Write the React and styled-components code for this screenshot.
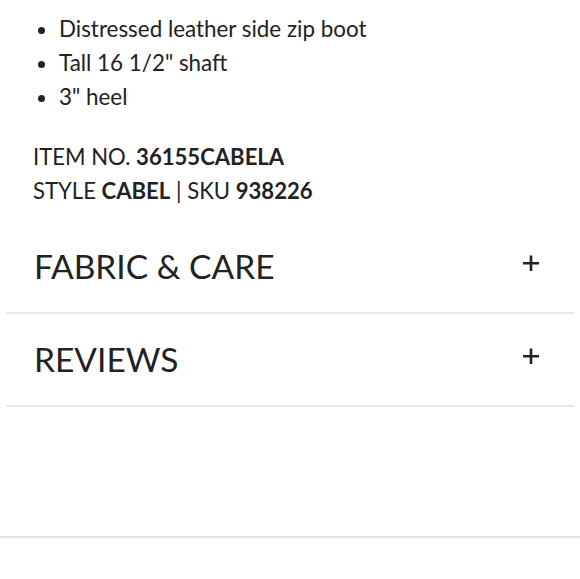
import React from "react";
import styled, { createGlobalStyle } from "styled-components";

const Global = createGlobalStyle`
  html, body { margin: 0; padding: 0; background: #fff; }
  body { font-family: Lato, "Noto Sans", sans-serif; color: #222; }
`;

const Page = styled.div`
  display: flex;
  flex-direction: column;
  padding-top: 12px;
`;

const Bullets = styled.ul`
  margin: 0;
  padding: 0 0 0 59px;
  font-size: 22.4px;
  line-height: 34px;
  list-style: disc;
`;

const Details = styled.div`
  margin: 26px 0 0;
  padding-left: 33px;
  font-size: 22.1px;
  line-height: 34px;
`;

const Line = styled.div``;

const B = styled.b`
  font-weight: 700;
`;

const Accordion = styled.div`
  margin: 13px 6px 0;
  display: flex;
  flex-direction: column;
`;

const Row = styled.div`
  display: flex;
  align-items: center;
  justify-content: space-between;
  padding: 25px 35px 26px 28px;
  border-bottom: 2px solid #e6e7e9;
`;

const Title = styled.div`
  font-size: 33.5px;
  line-height: 40px;
  font-weight: 400;
`;

const Plus = styled.svg`
  width: 16px;
  height: 16px;
  margin-top: -7px;
`;

const Bottom = styled.div`
  margin-top: 129px;
  height: 2px;
  background: #e4e4e4;
`;

const PlusIcon = () => (
  <Plus viewBox="0 0 16 16">
    <path d="M8 0.5V16M0 8.2H16" stroke="#222" strokeWidth="2.6" fill="none" />
  </Plus>
);

export default function App() {
  return (
    <>
      <Global />
      <Page>
        <Bullets>
          <li>Distressed leather side zip boot</li>
          <li>Tall 16 1/2" shaft</li>
          <li>3" heel</li>
        </Bullets>
        <Details>
          <Line>
            ITEM NO. <B>36155CABELA</B>
          </Line>
          <Line>
            STYLE <B>CABEL</B> | SKU <B>938226</B>
          </Line>
        </Details>
        <Accordion>
          <Row>
            <Title>FABRIC &amp; CARE</Title>
            <PlusIcon />
          </Row>
          <Row>
            <Title>REVIEWS</Title>
            <PlusIcon />
          </Row>
        </Accordion>
        <Bottom />
      </Page>
    </>
  );
}
